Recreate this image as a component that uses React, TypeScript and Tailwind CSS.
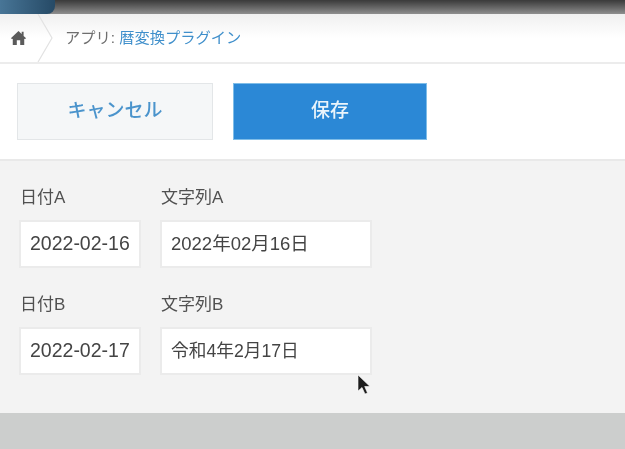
import React from "react";

const font = { fontFamily: '"Liberation Sans", "Noto Sans CJK JP", sans-serif' };

function Field({ label, value, size }: { label: string; value: string; size: "date" | "long" | "short" }) {
  const box =
    size === "date" ? "w-[122px] text-[19.5px]" : size === "long" ? "w-[212px] text-[18.5px]" : "w-[212px] text-[17.7px]";
  return (
    <div className={box}>
      <div className="h-[20px] pl-[1px] pt-[1px] text-[17px] leading-[20px] text-[#505050]">{label}</div>
      <div className="mt-[13px] flex h-[48px] items-center border-2 border-[#ebebeb] bg-white pl-[9px] text-[#444444]">
        {value}
      </div>
    </div>
  );
}

export default function App() {
  return (
    <div style={font} className="flex h-[449px] w-[625px] flex-col overflow-hidden bg-white blur-[0.4px]">
      <div className="relative h-[14px] shrink-0 bg-gradient-to-b from-[#3a3a3a] to-[#8f8f8f]">
        <div className="absolute left-[-8px] top-[-12px] h-[26px] w-[63px] rounded-b-[8px] bg-gradient-to-r from-[#4d7c9e] to-[#264a66]" />
      </div>
      <div className="relative flex h-[50px] shrink-0 items-center border-b-2 border-[#ececec] bg-gradient-to-b from-[#f0f0f0] via-white to-white">
        <div className="flex h-full w-[36px] items-center justify-center">
          <svg width="17" height="18" viewBox="0 0 16 16" fill="#5b5b5b">
            <path d="M8 1.5 L0.8 8.2 L2 9 L2.6 8.6 V14.6 H6.4 V10.2 H9.6 V14.6 H13.4 V8.6 L14 9 L15.2 8.2 L12.8 6 V2.2 H11 V4.3 Z" />
          </svg>
        </div>
        <svg className="absolute left-[37px] top-0" width="18" height="48" viewBox="0 0 18 48" fill="none">
          <path d="M1 0 L15 24 L1 48" stroke="#e2e2e2" strokeWidth="1.2" />
        </svg>
        <div className="ml-[29px] text-[15.25px] text-[#6e6e6e]">
          アプリ: <span className="text-[#3f8fcb]">暦変換プラグイン</span>
        </div>
      </div>
      <div className="flex h-[97px] shrink-0 gap-[20px] border-b-2 border-[#e9e9e9] pl-[17px] pt-[19px]">
        <button className="h-[57px] w-[196px] border border-[#e3e6e8] bg-[#f5f7f8] text-[19px] font-medium text-[#4b94cc]">
          キャンセル
        </button>
        <button className="h-[57px] w-[194px] border border-[#7fbde8] bg-[#2b88d6] text-[19px] font-medium text-[#eaf4fb]">
          保存
        </button>
      </div>
      <div className="flex h-[252px] shrink-0 flex-col gap-[26px] bg-[#f3f3f3] pl-[19px] pt-[26px]">
        <div className="flex gap-[19px]">
          <Field label="日付A" value="2022-02-16" size="date" />
          <Field label="文字列A" value="2022年02月16日" size="long" />
        </div>
        <div className="flex gap-[19px]">
          <Field label="日付B" value="2022-02-17" size="date" />
          <Field label="文字列B" value="令和4年2月17日" size="short" />
        </div>
      </div>
      <div className="flex-1 bg-[#cccecd]" />
      <svg className="absolute left-[356px] top-[373px]" width="16" height="24" viewBox="0 0 16 24">
        <path d="M2 2 L2 18 L6 14.5 L9 21 L11.5 20 L8.7 13.5 L14 13.5 Z" fill="#1c1c1c" stroke="#ffffff" strokeWidth="0.6" />
      </svg>
    </div>
  );
}
